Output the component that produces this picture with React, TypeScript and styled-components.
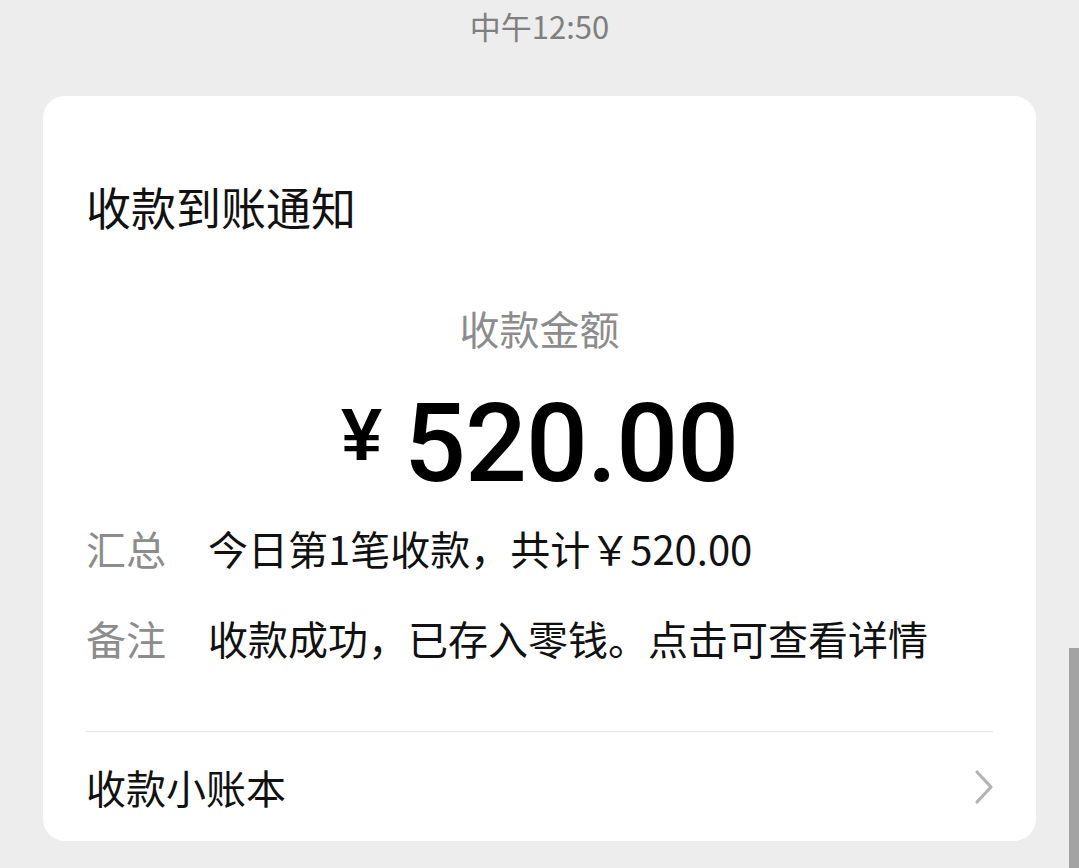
import { createGlobalStyle, styled } from "styled-components";

const GlobalStyle = createGlobalStyle`
  html, body {
    margin: 0;
    padding: 0;
    background: #ededed;
  }
  body {
    font-family: "Noto Sans CJK SC", "Noto Sans", sans-serif;
    overflow: hidden;
  }
`;

const CJK = `"Noto Sans CJK SC", "Noto Sans", sans-serif`;

const Page = styled.div`
  position: relative;
  width: 1079px;
  height: 868px;
  background: #ededed;
  display: flex;
  flex-direction: column;
  align-items: center;
  overflow: hidden;
`;

const Time = styled.div`
  height: 96px;
  padding-top: 6px;
  box-sizing: border-box;
  font-family: ${CJK};
  font-size: 31px;
  line-height: 40px;
  color: #7f7f7f;
`;

const Card = styled.div`
  width: 993px;
  background: #fff;
  border-radius: 22px;
  padding: 0 43px;
  box-sizing: border-box;
`;

const Title = styled.div`
  padding-top: 81px;
  font-family: ${CJK};
  font-size: 45px;
  line-height: 60px;
  color: #111;
`;

const Center = styled.div`
  display: flex;
  flex-direction: column;
  align-items: center;
`;

const Caption = styled.div`
  margin-top: 63px;
  font-family: ${CJK};
  font-size: 40px;
  line-height: 56px;
  color: #8c8c8c;
`;

const Amount = styled.div`
  margin-top: 33px;
  display: flex;
  align-items: baseline;
  gap: 22px;
  color: #000;
  height: 110px;
`;

const Yen = styled.span`
  font-family: "Liberation Sans", Arial, sans-serif;
  font-weight: 700;
  font-size: 74px;
  position: relative;
  top: -21px;
`;

const Digits = styled.span`
  font-family: Roboto, "Liberation Sans", sans-serif;
  font-weight: 500;
  font-size: 109px;
  line-height: 110px;
  letter-spacing: -1px;
`;

const InfoList = styled.div`
  margin-top: 21px;
  display: flex;
  flex-direction: column;
  gap: 34px;
  padding-bottom: 65px;
  border-bottom: 1.5px solid #e6e6e6;
`;

const InfoRow = styled.div`
  display: flex;
  font-family: ${CJK};
  font-size: 40px;
  line-height: 56px;
`;

const Label = styled.span`
  width: 122px;
  flex: none;
  color: #8c8c8c;
`;

const Value = styled.span`
  color: #111;
`;

const LinkRow = styled.div`
  height: 109px;
  display: flex;
  align-items: center;
  justify-content: space-between;
  font-family: ${CJK};
  font-size: 40px;
  color: #111;
`;

const Chevron = styled.svg`
  width: 22px;
  height: 36px;
  margin-right: -2px;
`;

const ScrollBar = styled.div`
  position: absolute;
  right: 0;
  top: 648px;
  width: 10px;
  height: 220px;
  background: #a3a3a3;
`;

const App: React.FC = () => {
  const rows = [
    { label: "汇总", value: "今日第1笔收款，共计￥520.00" },
    { label: "备注", value: "收款成功，已存入零钱。点击可查看详情" },
  ];

  return (
    <>
      <GlobalStyle />
      <Page>
        <Time>中午12:50</Time>
        <Card>
          <Title>收款到账通知</Title>
          <Center>
            <Caption>收款金额</Caption>
            <Amount>
              <Yen>¥</Yen>
              <Digits>520.00</Digits>
            </Amount>
          </Center>
          <InfoList>
            {rows.map((row) => (
              <InfoRow key={row.label}>
                <Label>{row.label}</Label>
                <Value>{row.value}</Value>
              </InfoRow>
            ))}
          </InfoList>
          <LinkRow>
            <span>收款小账本</span>
            <Chevron viewBox="0 0 22 36" fill="none">
              <path d="M4 3 L18 18 L4 33" stroke="#b3b3b3" strokeWidth="3.2" strokeLinecap="round" strokeLinejoin="round" />
            </Chevron>
          </LinkRow>
        </Card>
        <ScrollBar />
      </Page>
    </>
  );
};

export default App;
